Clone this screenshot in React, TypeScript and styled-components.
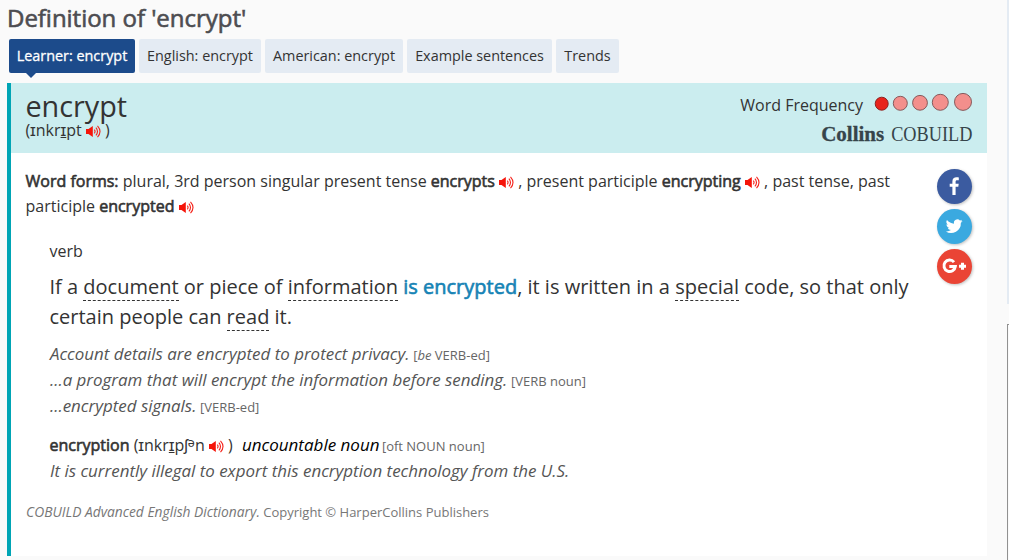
import React from "react";
import styled, { createGlobalStyle, css } from "styled-components";

const GlobalStyle = createGlobalStyle`
  * { box-sizing: border-box; }
  body {
    margin: 0;
    background: #fafafa;
    color: #333;
    font-family: "Open Sans", sans-serif;
    overflow: hidden;
  }
`;

const Page = styled.div`
  display: flex;
  justify-content: space-between;
  height: 560px;
`;

const Main = styled.main`
  width: 987px;
  padding-left: 7px;
`;

const strong = css`
  font-weight: 400;
  -webkit-text-stroke: 0.6px currentColor;
`;

const Title = styled.h1`
  ${strong}
  margin: 0;
  height: 39px;
  line-height: 35px;
  font-size: 24px;
  letter-spacing: -0.03px;
  color: #4d4d51;
  white-space: nowrap;
`;

const Tabs = styled.nav`
  display: flex;
  gap: 4px;
  height: 44px;
  padding-left: 2px;
`;

const Tab = styled.a<{ $width: number; $active?: boolean }>`
  position: relative;
  width: ${(p) => p.$width}px;
  height: 34px;
  line-height: 34px;
  border-radius: 2px;
  text-align: center;
  font-size: 14.4px;
  white-space: nowrap;
  background: ${(p) => (p.$active ? "#1c4b8b" : "#e4ebf3")};
  color: ${(p) => (p.$active ? "#fff" : "#333")};
  ${(p) =>
    p.$active &&
    css`
      -webkit-text-stroke: 0.3px currentColor;
      &::after {
        content: "";
        position: absolute;
        left: 17px;
        top: 34px;
        border: 5px solid transparent;
        border-top-color: #1c4b8b;
        border-bottom: 0;
      }
    `}
`;

const Card = styled.section`
  height: 473px;
  background: #fff;
  border-left: 4px solid #00a5b5;
`;

const CardHeader = styled.header`
  display: flex;
  justify-content: space-between;
  height: 70px;
  padding: 0 15px 0 14.4px;
  background: #cbedef;
`;

const Headword = styled.h2`
  margin: 0;
  padding-top: 4px;
  font-size: 28.8px;
  font-weight: 400;
  line-height: 38px;
`;

const Pron = styled.div`
  margin-top: -5px;
  height: 20px;
  font-size: 16px;
  line-height: 20px;
`;

const Meta = styled.div`
  display: flex;
  flex-direction: column;
  align-items: flex-end;
`;

const Frequency = styled.div`
  display: flex;
  align-items: flex-end;
  height: 33px;
  font-size: 16px;
  line-height: 22px;
`;

const Dots = styled.svg`
  display: block;
  width: 98px;
  height: 22px;
  margin: 0 0 5px 11px;
`;

const Brand = styled.div`
  display: flex;
  justify-content: flex-end;
  margin-top: 6px;
  font: 21px/24px "Liberation Serif", serif;
  color: #36444a;
  b {
    -webkit-text-stroke: 0.3px currentColor;
  }
`;

const BrandLine = styled.span`
  margin-left: -5.5px;
  transform: scaleX(0.87);
  transform-origin: right;
`;

const Body = styled.div`
  display: flex;
  justify-content: space-between;
  padding: 16px 15px 0 14.5px;
`;

const Entry = styled.div`
  width: 895px;
  white-space: nowrap;
`;

const Forms = styled.p`
  margin: 0 0 20px;
  height: 50px;
  font-size: 16px;
  line-height: 25px;
`;

const Strong = styled.b`
  ${strong}
`;

const Sense = styled.div`
  padding-left: 24px;
`;

const Pos = styled.div`
  font-size: 16px;
  line-height: 24px;
`;

const Meaning = styled.p`
  margin: 9px 0;
  height: 60px;
  font-size: 20px;
  line-height: 30px;
`;

const Term = styled.a`
  display: inline-block;
  height: 29px;
  border-bottom: 1px dashed #333;
`;

const Highlight = styled.b`
  ${strong}
  color: #1683b5;
`;

const Quote = styled.p<{ $gap?: number }>`
  margin: 0 0 ${(p) => p.$gap ?? 0}px;
  height: 26px;
  padding-left: 0.4px;
  font-size: 16.93px;
  line-height: 26px;
  font-style: italic;
  color: #555;
`;

const Grammar = styled.span`
  margin-left: -0.8px;
  font-size: 13px;
  line-height: 1;
  font-style: normal;
  color: #666;
  em { font-style: italic; }
`;

const Derived = styled.div`
  height: 26px;
  font-size: 16px;
  line-height: 26px;
  em {
    margin: 0 -1px 0 5px;
    font-size: 17px;
    line-height: 1;
    color: #000;
  }
`;

const Copyright = styled.footer`
  margin-top: 17px;
  padding-left: 0.6px;
  height: 22px;
  font-size: 13px;
  line-height: 22px;
  color: #777;
  em {
    font-size: 13.8px;
    line-height: 1;
  }
`;

const Raised = styled.span`
  position: relative;
  top: -4px;
  font-size: 12.5px;
  line-height: 1;
`;

const Share = styled.div`
  display: flex;
  flex-direction: column;
  gap: 5px;
`;

const ShareButton = styled.a<{ $color: string }>`
  width: 35px;
  height: 35px;
  border-radius: 50%;
  background: ${(p) => p.$color};
  box-shadow: 1px 1px 3px rgba(0, 0, 0, 0.25);
  svg { display: block; }
`;

const Aside = styled.aside`
  display: flex;
  flex-direction: column;
  justify-content: space-between;
  width: 2px;
`;

const AsideTop = styled.div`
  height: 304px;
  background: #e4ebf3;
`;

const AsideBox = styled.div`
  height: 236px;
  border: solid #919191;
  border-width: 1px 0 0 1px;
`;

const SpeakerIcon = styled.svg`
  width: 15px;
  height: 13px;
  vertical-align: -2px;
`;

const Speaker = () => (
  <SpeakerIcon viewBox="0 0 15 13" fill="none" stroke="#f5241c" strokeWidth="1.1">
    <path d="M0 3.9h2.5L6.8.9v11.2L2.5 9.1H0z" fill="#f5150a" stroke="none" />
    <path d="M8.3 4.7q1.5 1.8 0 3.6M9.9 2.7q3.2 3.8 0 7.6M11.5.8q5 5.7 0 11.4" />
  </SpeakerIcon>
);

const dots = [
  [7.7, 14.7, 6.5],
  [26.3, 14.3, 7],
  [46, 13.8, 7.4],
  [66.3, 13.3, 8],
  [89, 12.9, 8.5],
];

export default function App() {
  return (
    <>
      <GlobalStyle />
      <Page>
        <Main>
          <Title>Definition of 'encrypt'</Title>
          <Tabs>
            <Tab $width={126} $active>Learner: encrypt</Tab>
            <Tab $width={122}>English: encrypt</Tab>
            <Tab $width={138}>American: encrypt</Tab>
            <Tab $width={145}>Example sentences</Tab>
            <Tab $width={63}>Trends</Tab>
          </Tabs>
          <Card>
            <CardHeader>
              <div>
                <Headword>encrypt</Headword>
                <Pron>(ɪnkr<u>ɪ</u>pt <Speaker /> )</Pron>
              </div>
              <Meta>
                <Frequency>
                  Word Frequency
                  <Dots viewBox="0 0 98 22">
                    {dots.map(([cx, cy, r], i) => (
                      <circle key={cx} cx={cx} cy={cy} r={r} fill={i ? "#f38f8c" : "#e8241c"} stroke={i ? "#865a5c" : "#8c2220"} />
                    ))}
                  </Dots>
                </Frequency>
                <Brand><b>Collins</b><BrandLine>COBUILD</BrandLine></Brand>
              </Meta>
            </CardHeader>
            <Body>
              <Entry>
                <Forms>
                  <Strong>Word forms:</Strong> plural, 3rd person singular present tense <Strong>encrypts</Strong> <Speaker /> , present participle <Strong>encrypting</Strong> <Speaker /> , past tense, past
                  <br />
                  participle <Strong>encrypted</Strong> <Speaker />
                </Forms>
                <Sense>
                  <Pos>verb</Pos>
                  <Meaning>
                    If a <Term>document</Term> or piece of <Term>information</Term> <Highlight>is encrypted</Highlight>, it is written in a <Term>special</Term> code, so that only
                    <br />
                    certain people can <Term>read</Term> it.
                  </Meaning>
                  <Quote>Account details are encrypted to protect privacy. <Grammar>[<em>be</em> VERB-ed]</Grammar></Quote>
                  <Quote>...a program that will encrypt the information before sending. <Grammar>[VERB noun]</Grammar></Quote>
                  <Quote $gap={13}>...encrypted signals. <Grammar>[VERB-ed]</Grammar></Quote>
                  <Derived>
                    <Strong>encryption</Strong> (ɪnkr<u>ɪ</u>pʃ<Raised>ə</Raised>n <Speaker /> ) <em>uncountable noun</em> <Grammar>[oft NOUN noun]</Grammar>
                  </Derived>
                  <Quote>It is currently illegal to export this encryption technology from the U.S.</Quote>
                </Sense>
                <Copyright><em>COBUILD Advanced English Dictionary.</em> Copyright © HarperCollins Publishers</Copyright>
              </Entry>
              <Share>
                <ShareButton $color="#3b5ba0">
                  <svg width="35" height="35"><path d="M15.4 26v-8.2h-2.7v-3h2.7v-2.4c0-2.8 1.7-4.1 4.1-4.1 1.2 0 2 .1 2.3.1v2.8h-1.6c-1.3 0-1.6.7-1.6 1.6v2h3.1l-.4 3h-2.7V26z" fill="#fff" /></svg>
                </ShareButton>
                <ShareButton $color="#3aa9e0">
                  <svg width="35" height="35"><path transform="translate(9 8.8) scale(.7)" d="M23.6 4.6a9.8 9.8 0 0 1-2.8.8 4.9 4.9 0 0 0 2.2-2.7c-1 .6-2 1-3.1 1.2a4.9 4.9 0 0 0-8.4 4.5A14 14 0 0 1 1.4 3.2a4.9 4.9 0 0 0 1.5 6.6 4.9 4.9 0 0 1-2.2-.6 4.9 4.9 0 0 0 3.9 4.8 5 5 0 0 1-2.2.1 4.9 4.9 0 0 0 4.6 3.4A9.9 9.9 0 0 1-.3 19.5 14 14 0 0 0 21.2 7c1-.7 1.8-1.5 2.4-2.4z" fill="#fff" /></svg>
                </ShareButton>
                <ShareButton $color="#ea4435">
                  <svg width="35" height="35" fill="none" stroke="#fff" strokeWidth="3"><path d="M17 13.1a5.7 5.7 0 1 0 1.3 4.4h-6M22 17.3h7M25.5 13.8v7" /></svg>
                </ShareButton>
              </Share>
            </Body>
          </Card>
        </Main>
        <Aside>
          <AsideTop />
          <AsideBox />
        </Aside>
      </Page>
    </>
  );
}
